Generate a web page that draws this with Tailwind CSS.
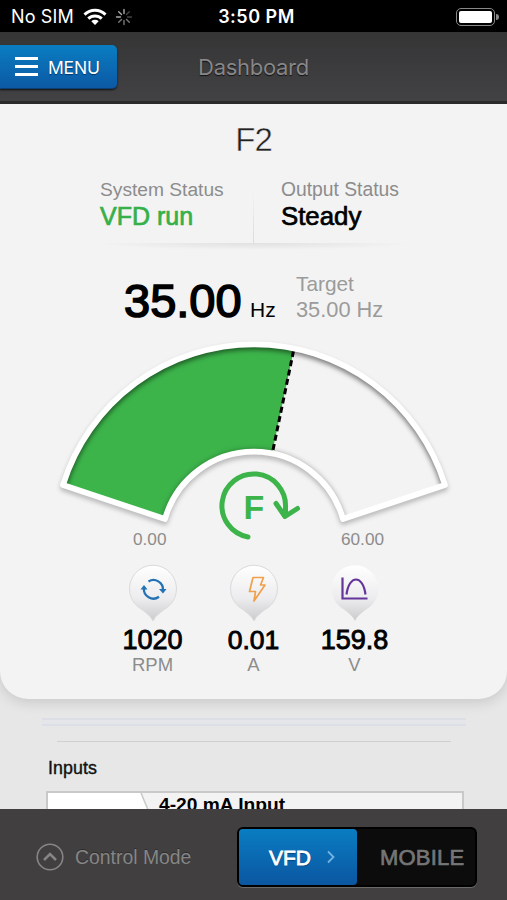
<!DOCTYPE html>
<html lang="en">
<head>
    <meta charset="UTF-8">
    <meta name="viewport" content="width=device-width, initial-scale=1.0">
    <title>Dashboard</title>
    <script src="https://cdn.jsdelivr.net/npm/@tailwindcss/browser@4"></script>
</head>
<body class="w-[507px] h-[900px] overflow-hidden flex flex-col bg-[#e7e7e7] font-['Liberation_Sans',sans-serif] text-black">
    <!-- Status bar -->
    <div class="h-8 shrink-0 bg-black text-white grid grid-cols-3 items-center font-['Inter',sans-serif]">
        <div class="flex items-center pl-[11px] pt-[2px]">
            <span class="text-[18px] leading-6 tracking-[0.15px] w-[72px] whitespace-nowrap">No SIM</span>
            <svg class="w-6 h-[18px] shrink-0" viewBox="0 0 24 18" fill="none" stroke="#fff" stroke-width="3">
                <path d="M1.5 6.6a15 15 0 0 1 21 0M5.3 10.6a9.6 9.6 0 0 1 13.4 0"/>
                <path d="M12 17l-3.7-3.8a5.4 5.4 0 0 1 7.4 0z" fill="#fff" stroke="none"/>
            </svg>
            <svg class="w-[18px] h-[18px] ml-2 shrink-0" viewBox="0 0 18 18" stroke-width="1.4" stroke-linecap="round">
                <path stroke="#aaa" d="M9 1.500v4M3.700 3.700l2.800 2.800M1.500 9h4"/>
                <path stroke="#777" d="M3.700 14.300l2.800-2.800M9 12.500v4M11.500 11.500l2.800 2.800"/>
                <path stroke="#444" d="M12.500 9h4M11.500 6.500l2.800-2.800"/>
            </svg>
        </div>
        <div class="text-center text-[18px] leading-6 font-semibold pt-[2px] pl-[6px] tracking-[0.5px]">3:50 PM</div>
        <div class="flex justify-end items-center pr-2 pt-[2px]">
            <div class="w-[39px] h-[18px] rounded-[5px] border border-[#888] p-[2px]">
                <div class="h-full rounded-[2px] bg-white"></div>
            </div>
            <div class="w-[3px] h-[6px] ml-px rounded-r-full bg-[#888]"></div>
        </div>
    </div>

    <!-- Header -->
    <header class="relative h-[72px] shrink-0 bg-linear-to-b from-[#363536] to-[#424143] border-b-[3px] border-[#2b2a2b] font-['Inter',sans-serif]">
        <button class="mt-[13px] w-[117px] h-[44px] flex items-center gap-[10px] pl-[15px] rounded-r-[5px] bg-linear-to-b from-[#0a7dc2] to-[#0c59a4] border-b border-[#0b3f78] shadow-[0_1px_2px_#111] text-white">
            <span class="flex flex-col gap-[5px]">
                <span class="w-[23px] h-[3px] bg-white"></span>
                <span class="w-[23px] h-[3px] bg-white"></span>
                <span class="w-[23px] h-[3px] bg-white"></span>
            </span>
            <span class="text-[17.500px] leading-6 pt-[2px] tracking-[-0.2px] [text-shadow:0_1px_1px_#00356b]">MENU</span>
        </button>
        <h1 class="absolute inset-x-0 top-[21px] text-center text-[22px] leading-7 tracking-[-0.3px] text-[#878688] [text-shadow:0_1px_1px_#111]">Dashboard</h1>
    </header>

    <!-- Main card -->
    <main class="h-[595px] shrink-0 rounded-b-[28px] bg-[#f3f3f3] pt-4 shadow-[0_3px_14px_rgba(0,0,0,0.14)]">
        <h2 class="h-10 text-center text-[33px] leading-10 tracking-[-1px] text-[#222] [-webkit-text-stroke:0.5px_#f3f3f3]">F2</h2>

        <div class="mt-[18px] h-[65px] mx-[100px] flex relative">
            <div class="w-[153px] shrink-0">
                <div class="text-[19.200px] leading-6 text-[#8c8c8c] whitespace-nowrap">System Status</div>
                <div class="text-[25px] leading-7 text-[#35b04a] whitespace-nowrap [-webkit-text-stroke:0.7px]">VFD run</div>
            </div>
            <div class="w-px h-[51px] mt-[14px] shrink-0 bg-linear-to-b from-transparent to-[#dadada]"></div>
            <div class="pl-[27px]">
                <div class="text-[19.300px] leading-6 text-[#8c8c8c] whitespace-nowrap">Output Status</div>
                <div class="text-[25.800px] leading-7 whitespace-nowrap [-webkit-text-stroke:0.7px]">Steady</div>
            </div>
            <div class="absolute -left-1 -right-1 top-[65px] h-[7px] bg-[radial-gradient(ellipse_50%_100%_at_50%_0%,#e0e0e0,transparent)]"></div>
        </div>

        <div class="mt-[29px] h-[58px] pl-[124px] flex">
            <div class="w-[126px] pt-[5px] text-[47px] leading-[48px] whitespace-nowrap [-webkit-text-stroke:1.6px]">35.00</div>
            <div class="w-[46px] pt-[23px] text-[21px] leading-[30px]">Hz</div>
            <div class="-mt-px text-[#9b9b9b] whitespace-nowrap">
                <div class="text-[20.800px] leading-[25px]">Target</div>
                <div class="pt-px text-[21.800px] leading-[26px]">35.00 Hz</div>
            </div>
        </div>

        <!-- Gauge -->
        <svg class="block w-[507px] h-[220px] -mb-[21px]" viewBox="0 330 507 220">
            <defs>
                <clipPath id="gauge"><path d="M63 485A200 200 0 0 1 445 485L343 519A92.500 92.500 0 0 0 165 519Z"/></clipPath>
                <filter id="soft" x="-10%" y="-10%" width="120%" height="120%"><feGaussianBlur stdDeviation="2.500"/></filter>
            </defs>
            <path filter="url(#soft)" d="M63 488A200 200 0 0 1 445 488L343 522A92.500 92.500 0 0 0 165 522Z" fill="none" stroke="#000" stroke-opacity=".28" stroke-width="5.500" stroke-linejoin="round"/>
            <g clip-path="url(#gauge)">
                <rect x="50" y="330" width="410" height="200" fill="#f3f3f3"/>
                <path d="M50 330H298L270 463L254 545H50Z" fill="#3cb44a"/>
                <path filter="url(#soft)" d="M63 487A200 200 0 0 1 445 487" fill="none" stroke="#000" stroke-opacity=".5" stroke-width="7"/>
                <path filter="url(#soft)" d="M165 519A92.500 92.500 0 0 1 343 519" fill="none" stroke="#000" stroke-opacity=".3" stroke-width="6"/>
                <path d="M293.500 351L273 450" stroke="#000" stroke-width="3" stroke-dasharray="6 3.500"/>
            </g>
            <path d="M63 485A200 200 0 0 1 445 485L343 519A92.500 92.500 0 0 0 165 519Z" fill="none" stroke="#fff" stroke-width="5.800" stroke-linejoin="round"/>
            <path d="M248 537A31.800 31.800 0 1 1 285.500 507.500V516M276 503.500L285 516.500L297.500 508.500" fill="none" stroke="#3cb44a" stroke-width="5" stroke-linecap="round" stroke-linejoin="round"/>
            <text x="243.500" y="518.500" font-size="34" font-weight="700" fill="#3cb44a">F</text>
        </svg>

        <div class="h-[34px] px-[123px] flex justify-between text-[17.200px] leading-5 text-[#8c8c8c]">
            <span class="pl-[10px]">0.00</span>
            <span>60.00</span>
        </div>

        <!-- Readings -->
        <div class="px-[102px] grid grid-cols-3 text-center">
            <div class="flex flex-col items-center">
                <svg class="w-[52px] h-[62px]" viewBox="0 0 52 62" fill="none">
                    <defs>
                        <linearGradient id="pin" x1="0" y1="0" x2="0" y2="1"><stop stop-color="#fff"/><stop offset=".6" stop-color="#ececee"/><stop offset="1" stop-color="#cbcbcd"/></linearGradient>
                    </defs>
                    <path d="M26 58C24 53 19 50 15 46.500A23.500 23.500 0 1 1 37 46.500C33 50 28 53 26 58Z" fill="url(#pin)" stroke="#dadada"/>
                    <path d="M21.500 18.500A9.500 9.500 0 0 1 36 27M32 33.800A9.500 9.500 0 0 1 17 25" stroke="#2372b5" stroke-width="2.300"/>
                    <path d="M32 26H39.500L36 30.500ZM13.500 26.500H20.500L17 22Z" fill="#2372b5"/>
                </svg>
                <div class="text-[27px] leading-[30px] [-webkit-text-stroke:0.9px]">1020</div>
                <div class="text-[18.500px] leading-[20px] text-[#8c8c8c]">RPM</div>
            </div>
            <div class="flex flex-col items-center">
                <svg class="w-[52px] h-[62px]" viewBox="0 0 52 62" fill="none">
                    <path d="M26 58C24 53 19 50 15 46.500A23.500 23.500 0 1 1 37 46.500C33 50 28 53 26 58Z" fill="url(#pin)" stroke="#dadada"/>
                    <path d="M25 14.500H35.500L32.500 22H37L26 38L27.500 28.500H21.500Z" stroke="#f0a04b" stroke-width="1.700" stroke-linejoin="round"/>
                </svg>
                <div class="text-[26.500px] leading-[30px] [-webkit-text-stroke:0.9px]">0.01</div>
                <div class="text-[18.500px] leading-[20px] text-[#8c8c8c]">A</div>
            </div>
            <div class="flex flex-col items-center">
                <svg class="w-[52px] h-[62px]" viewBox="0 0 52 62" fill="none">
                    <path d="M26 58C24 53 19 50 15 46.500A23.500 23.500 0 1 1 37 46.500C33 50 28 53 26 58Z" fill="url(#pin)"/>
                    <path d="M13.500 14.500V35.500H38.500" stroke="#64359b" stroke-width="2.200"/>
                    <path d="M17.500 31.500C20 11.500 34 11.500 36.500 31.500" stroke="#64359b" stroke-width="2.200"/>
                </svg>
                <div class="text-[27px] leading-[30px] [-webkit-text-stroke:0.9px]">159.8</div>
                <div class="text-[18.500px] leading-[20px] text-[#8c8c8c]">V</div>
            </div>
        </div>
    </main>

    <!-- Inputs -->
    <section class="h-[110px] shrink-0 overflow-hidden pt-[19px]">
        <div class="h-[8px] ml-[42px] mr-[41px] border-y-2 border-[#dddfe6] bg-[#e5e6ea]"></div>
        <div class="mt-[15px] ml-[57px] mr-[56px] h-px bg-[#d0d0d0]"></div>
        <h3 class="mt-[14px] pl-[48px] text-[17.800px] leading-6 tracking-[0.1px] text-[#111] [-webkit-text-stroke:0.4px]">Inputs</h3>
        <div class="mt-[11px] ml-[46px] mr-[43px] h-10 flex border-2 border-[#c9c9c9] bg-[#f3f3f3]">
            <svg class="w-[111px] h-9 shrink-0" viewBox="0 0 111 36">
                <path d="M0 0H93L108 36H0Z" fill="#fff"/>
                <path d="M93 0L108 36" stroke="#c9c9c9" stroke-width="1.500"/>
            </svg>
            <div class="text-[19.200px] leading-6 font-bold">4-20 mA Input</div>
        </div>
    </section>

    <!-- Control mode -->
    <footer class="relative h-[91px] shrink-0 bg-[#413f40] flex items-center pt-[5px] pl-[36px]">
        <svg class="w-7 h-7 shrink-0" viewBox="0 0 28 28" fill="none" stroke="#868686">
            <circle cx="14" cy="14" r="12.800" stroke-width="1.600"/>
            <path d="M8 17L14 11L20 17" stroke-width="2.500"/>
        </svg>
        <span class="ml-[11px] w-[162px] pt-[2px] text-[19.400px] text-[#868686] whitespace-nowrap [text-shadow:0_-1px_0_#2e2d2d]">Control Mode</span>
        <div class="w-[240px] h-[60px] shrink-0 flex rounded-[6px] border-2 border-black bg-[#0c0c0c] shadow-[0_1px_0_#6a6a6a]">
            <button class="w-[118px] shrink-0 flex items-center pl-[30px] rounded-[4px] bg-linear-to-b from-[#0a7dc2] to-[#0b56a1] text-white">
                <span class="w-[58px] pt-px text-left text-[21px] [-webkit-text-stroke:0.8px] [text-shadow:0_1px_1px_#002f60]">VFD</span>
                <svg class="w-2 h-3.5" viewBox="0 0 8 14" fill="none" stroke="#72b5e2" stroke-width="1.800"><path d="M1 1.500L6.500 7L1 12.500"/></svg>
            </button>
            <button class="pl-[23px] pt-px text-[22px] tracking-[0.2px] text-[#757575] [-webkit-text-stroke:0.7px]">MOBILE</button>
        </div>
    </footer>
</body>
</html>
